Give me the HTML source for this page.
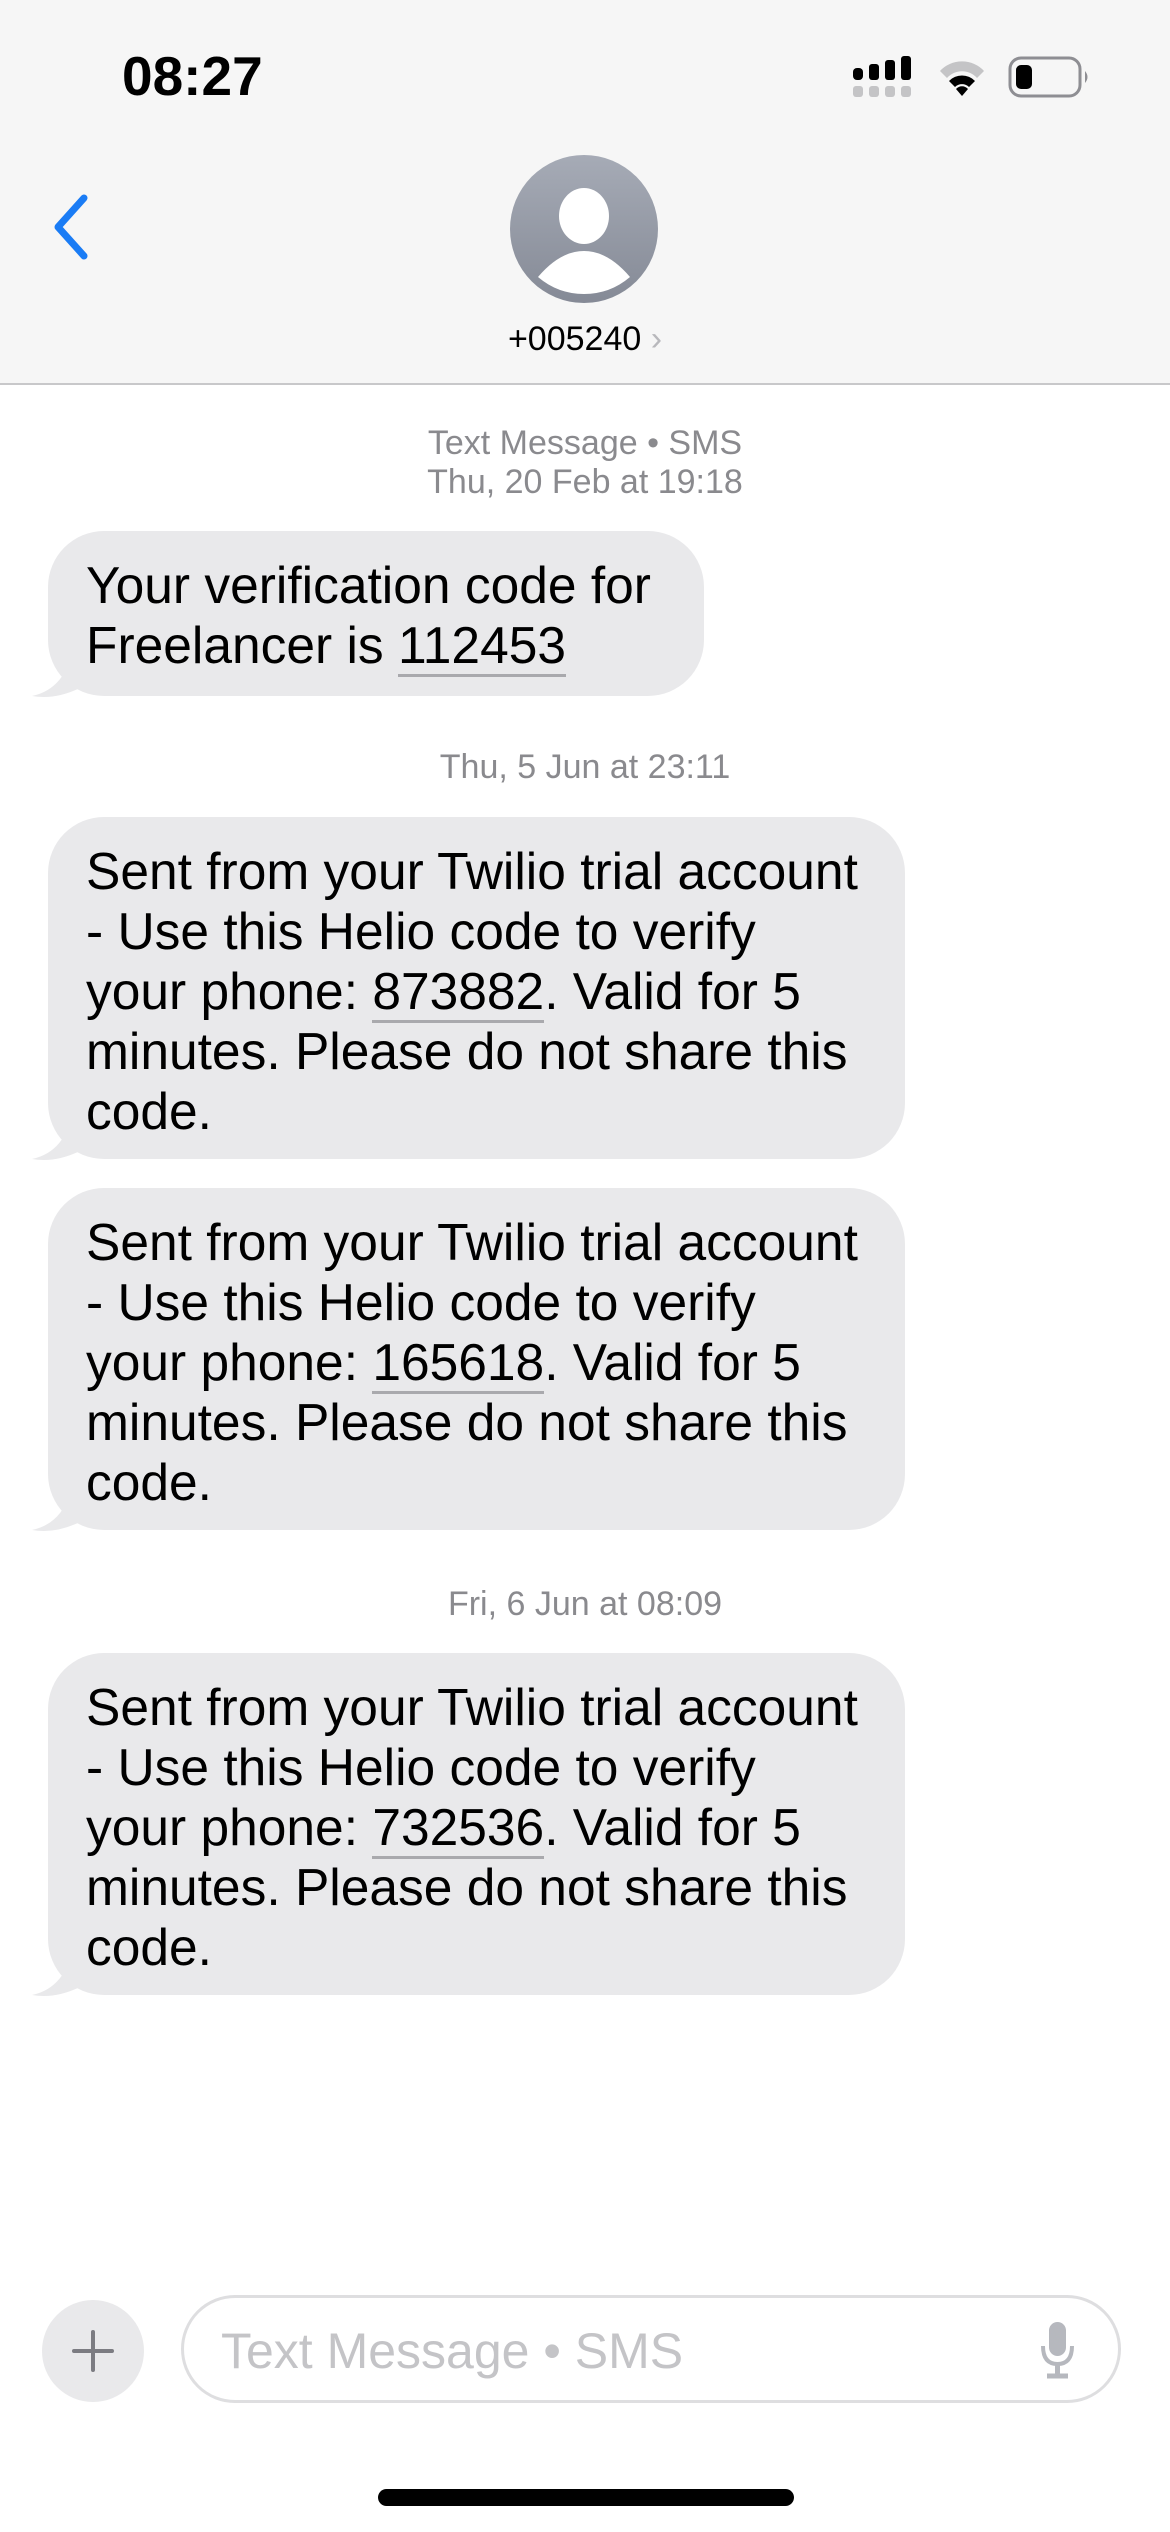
<!DOCTYPE html>
<html><head><meta charset="utf-8"><style>
*{margin:0;padding:0;box-sizing:border-box}
body{width:1170px;height:2532px;background:#fff;font-family:"Liberation Sans",Arial,sans-serif;position:relative;overflow:hidden}
.hdr{position:absolute;left:0;top:0;width:1170px;height:385px;background:#f6f6f6;border-bottom:2px solid #c8c8ca}
.time{position:absolute;left:122px;top:44px;font-size:55px;font-weight:bold;color:#000;letter-spacing:0px}
.ts{position:absolute;left:0;width:1170px;text-align:center;color:#8a8a8e;font-size:34px;line-height:39px}
.b{position:absolute;left:48px;background:#e9e9eb;border-radius:56px;padding:24px 0 0 38px;font-size:51.5px;line-height:60px;color:#000;white-space:nowrap}
.b u{text-decoration:none;border-bottom:3px solid #a9a9ad;}
.tail{position:absolute;left:30px;width:50px;height:40px}
</style></head><body>
<div class="hdr">
<div class="time">08:27</div>
<svg style="position:absolute;left:853px;top:56px" width="62" height="42" viewBox="0 0 62 42">
<rect x="0" y="12" width="10" height="12" rx="4" fill="#000"/><rect x="16" y="8" width="10" height="16" rx="3" fill="#000"/><rect x="32" y="4" width="10" height="20" rx="3" fill="#000"/><rect x="48" y="0" width="10" height="24" rx="3" fill="#000"/>
<rect x="0" y="30" width="10" height="11" rx="3" fill="#c4c4c6"/><rect x="16" y="30" width="10" height="11" rx="3" fill="#c4c4c6"/><rect x="32" y="30" width="10" height="11" rx="3" fill="#c4c4c6"/><rect x="48" y="30" width="10" height="11" rx="3" fill="#c4c4c6"/>
</svg>
<svg style="position:absolute;left:937px;top:58px" width="50" height="40" viewBox="0 0 50 40">
<path d="M3 13 A30 30 0 0 1 47 13 L40 20 A20 20 0 0 0 10 20 Z" fill="#c4c4c6"/>
<path d="M12 23 A18 18 0 0 1 38 23 L32 29 A10 10 0 0 0 18 29 Z" fill="#000"/>
<path d="M19 31 A8 8 0 0 1 31 31 L25 38 Z" fill="#000"/>
</svg>
<svg style="position:absolute;left:1008px;top:56px" width="86" height="42" viewBox="0 0 86 42">
<rect x="2" y="2" width="70" height="38" rx="11" fill="none" stroke="#8e8e93" stroke-width="3"/>
<rect x="8" y="9" width="16" height="24" rx="5" fill="#000"/>
<path d="M77 15 Q82 21 77 27 Z" fill="#8e8e93"/>
</svg>
<svg style="position:absolute;left:48px;top:192px" width="44" height="70" viewBox="0 0 44 70">
<path d="M36 6 L10 35 L36 64" fill="none" stroke="#1a7cf5" stroke-width="7" stroke-linecap="round" stroke-linejoin="round"/>
</svg>
<svg style="position:absolute;left:510px;top:155px" width="148" height="148" viewBox="0 0 148 148">
<defs><linearGradient id="g" x1="0" y1="0" x2="0" y2="1"><stop offset="0" stop-color="#a6abb6"/><stop offset="1" stop-color="#858a96"/></linearGradient></defs>
<circle cx="74" cy="74" r="74" fill="url(#g)"/>
<ellipse cx="74" cy="61" rx="25" ry="28" fill="#fff"/>
<path d="M28 122 Q50 96 74 96 Q98 96 120 122 Q100 139 74 139 Q48 139 28 122 Z" fill="#fff"/>
</svg>
<div style="position:absolute;left:0;width:1170px;top:320px;text-align:center;font-size:34px;color:#000">+005240 <span style="color:#b8b8bc;font-size:34px">›</span></div>
</div>

<div class="ts" style="top:424px">Text Message • SMS<br>Thu, 20 Feb at 19:18</div>
<div class="b" style="top:531px;width:656px;height:165px">Your verification code for<br>Freelancer is <u>112453</u></div>
<svg class="tail" style="top:660px" viewBox="0 0 50 40"><path d="M40 0 Q30 30 2 36 Q25 40 50 28 Z" fill="#e9e9eb"/></svg>

<div class="ts" style="top:748px">Thu, 5 Jun at 23:11</div>
<div class="b" style="top:817px;width:857px;height:342px">Sent from your Twilio trial account<br>- Use this Helio code to verify<br>your phone: <u>873882</u>. Valid for 5<br>minutes. Please do not share this<br>code.</div>
<svg class="tail" style="top:1123px" viewBox="0 0 50 40"><path d="M40 0 Q30 30 2 36 Q25 40 50 28 Z" fill="#e9e9eb"/></svg>

<div class="b" style="top:1188px;width:857px;height:342px">Sent from your Twilio trial account<br>- Use this Helio code to verify<br>your phone: <u>165618</u>. Valid for 5<br>minutes. Please do not share this<br>code.</div>
<svg class="tail" style="top:1494px" viewBox="0 0 50 40"><path d="M40 0 Q30 30 2 36 Q25 40 50 28 Z" fill="#e9e9eb"/></svg>

<div class="ts" style="top:1585px">Fri, 6 Jun at 08:09</div>
<div class="b" style="top:1653px;width:857px;height:342px">Sent from your Twilio trial account<br>- Use this Helio code to verify<br>your phone: <u>732536</u>. Valid for 5<br>minutes. Please do not share this<br>code.</div>
<svg class="tail" style="top:1959px" viewBox="0 0 50 40"><path d="M40 0 Q30 30 2 36 Q25 40 50 28 Z" fill="#e9e9eb"/></svg>

<div style="position:absolute;left:42px;top:2300px;width:102px;height:102px;border-radius:50%;background:#e9e9eb"></div>
<svg style="position:absolute;left:72px;top:2330px" width="42" height="42" viewBox="0 0 42 42"><path d="M21 2 V40 M2 21 H40" stroke="#7c7c82" stroke-width="4" stroke-linecap="round"/></svg>
<div style="position:absolute;left:181px;top:2295px;width:940px;height:108px;border:3px solid #dedee0;border-radius:54px"></div>
<div style="position:absolute;left:221px;top:2322px;font-size:50px;color:#c4c4c7">Text Message • SMS</div>
<svg style="position:absolute;left:1038px;top:2320px" width="40" height="62" viewBox="0 0 40 62">
<rect x="11" y="2" width="17" height="34" rx="8.5" fill="#b6b8be"/>
<path d="M5 26 Q5 44 19.5 44 Q34 44 34 26" fill="none" stroke="#b6b8be" stroke-width="4"/>
<path d="M19.5 44 V55 M9 56 H30" stroke="#b6b8be" stroke-width="5"/>
</svg>
<div style="position:absolute;left:378px;top:2489px;width:416px;height:17px;border-radius:9px;background:#000"></div>
</body></html>
